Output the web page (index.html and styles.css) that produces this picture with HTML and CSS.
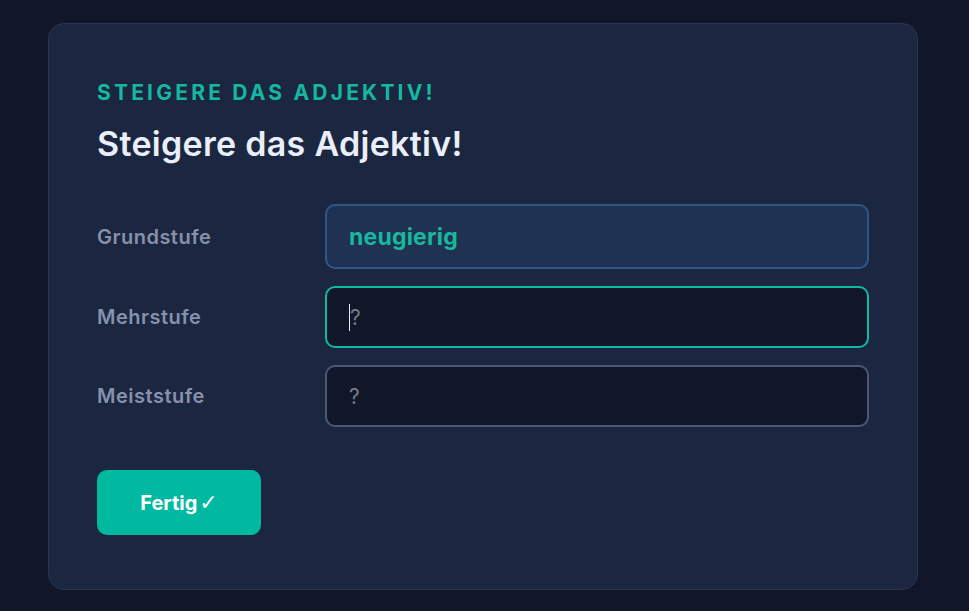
FILE: index.html
```html
<!DOCTYPE html>
<html lang="de">
<head>
<meta charset="utf-8">
<title>Steigere das Adjektiv!</title>
<link rel="stylesheet" href="styles.css">
</head>
<body>
<main class="card">
  <p class="eyebrow">STEIGERE DAS ADJEKTIV!</p>
  <h1 class="title">Steigere das Adjektiv!</h1>
  <div class="rows">
    <div class="row">
      <span class="label">Grundstufe</span>
      <div class="field field-given">neugierig</div>
    </div>
    <div class="row">
      <span class="label">Mehrstufe</span>
      <div class="field field-focus"><span class="caret"></span><span class="placeholder">?</span></div>
    </div>
    <div class="row">
      <span class="label">Meiststufe</span>
      <div class="field field-empty"><span class="placeholder">?</span></div>
    </div>
  </div>
  <button class="btn" type="button">Fertig<span class="check">✓</span></button>
</main>
</body>
</html>
```
FILE: styles.css
```css
html, body {
  margin: 0;
  padding: 0;
  background: #111729;
  height: 100%;
}
body {
  font-family: Inter, "Noto Sans", sans-serif;
  padding: 23px 0 0 48px;
  box-sizing: border-box;
}
.card {
  width: 870px;
  height: 567px;
  box-sizing: border-box;
  background: #1b2641;
  border: 1px solid #2a3552;
  border-radius: 16px;
  padding: 55px 48px 0 48px;
  display: flex;
  flex-direction: column;
  align-items: flex-start;
}
.eyebrow {
  margin: 0;
  color: #14b8a0;
  font-size: 21px;
  line-height: 28px;
  font-weight: 700;
  letter-spacing: 3.2px;
}
.title {
  margin: 17px 0 0 0;
  color: #e9eef8;
  font-size: 34px;
  line-height: 40px;
  font-weight: 600;
  letter-spacing: 0.3px;
}
.rows {
  margin-top: 40px;
  width: 772px;
  display: flex;
  flex-direction: column;
  gap: 17px;
}
.row {
  display: grid;
  grid-template-columns: 228px 1fr;
  align-items: center;
}
.label {
  color: #8791ab;
  font-size: 20px;
  font-weight: 600;
  letter-spacing: 0.5px;
}
.field {
  height: 62px;
  box-sizing: border-box;
  border: 2px solid;
  border-radius: 10px;
  padding: 0 22px;
  display: flex;
  align-items: center;
}
.field-given {
  height: 65px;
  background: #1f3251;
  border-color: #2e5888;
  color: #17b89f;
  font-size: 23px;
  font-weight: 700;
  letter-spacing: 0.2px;
}
.field-focus {
  background: #111729;
  border-color: #10b9a1;
}
.field-empty {
  background: #111729;
  border-color: #4d5876;
}
.placeholder {
  color: #777d89;
  font-size: 21px;
  font-weight: 400;
}
.caret {
  display: inline-block;
  width: 1px;
  height: 27px;
  background: #e8ecf4;
}
.btn {
  margin-top: 43px;
  width: 164px;
  height: 65px;
  border: none;
  border-radius: 10px;
  background: #00b9a0;
  color: #ffffff;
  font-family: Inter, "Noto Sans", sans-serif;
  font-size: 20px;
  font-weight: 700;
  cursor: pointer;
  display: flex;
  align-items: center;
  justify-content: center;
  gap: 2px;
}
.check {
  font-family: "DejaVu Sans", sans-serif;
  font-weight: 700;
  font-size: 22px;
}
```
